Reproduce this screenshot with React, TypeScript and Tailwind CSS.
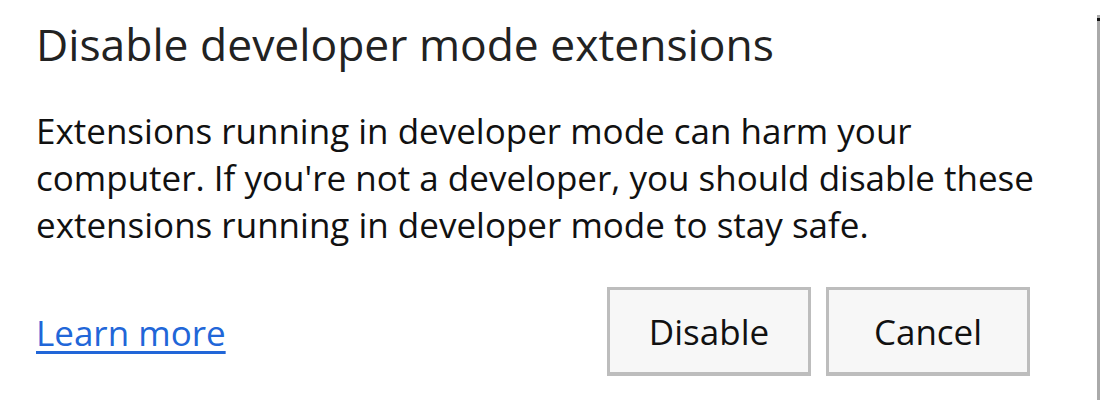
import React from 'react';

export default function App() {
	return (
		<div className="relative h-[400px] w-[1100px] overflow-hidden bg-white font-['Open_Sans',sans-serif] text-[#222]">
			<div className="pl-[36px] pr-[70px] pt-[14px]">
				<h1 className="text-[44.4px] leading-[60px] font-normal text-[#222]">Disable developer mode extensions</h1>
				<p className="mt-[33px] whitespace-nowrap text-[35px] leading-[47px] text-[#111]">
					<span className="block">Extensions running in developer mode can harm your</span>
					<span className="block">computer. If you're not a developer, you should disable these</span>
					<span className="block">extensions running in developer mode to stay safe.</span>
				</p>
				<div className="mt-[39px] flex items-center justify-between">
					<a href="#" className="mt-[2px] text-[35px] leading-[47px] text-[#2166d8] underline decoration-[3px] underline-offset-[5px]">
						Learn more
					</a>
					<div className="flex gap-[15px]">
						<button className="h-[89px] w-[204px] border-[3px] border-b-[4px] border-[#bdbdbd] bg-[#f7f7f7] text-[35px] leading-[47px] text-[#111]">
							Disable
						</button>
						<button className="h-[89px] w-[204px] border-[3px] border-b-[4px] border-[#bdbdbd] bg-[#f7f7f7] text-[35px] leading-[47px] text-[#111]">
							Cancel
						</button>
					</div>
				</div>
			</div>
			<div className="absolute right-0 top-[15px] bottom-0 w-[3px] bg-[#aaaaaa]">
				<div className="mt-[3px] h-[3px] bg-[#111]" />
			</div>
		</div>
	);
}
